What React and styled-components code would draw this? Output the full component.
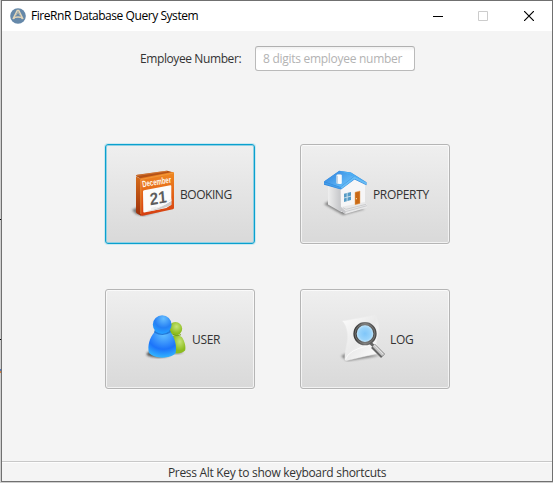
import React from "react";
import styled, { createGlobalStyle } from "styled-components";

const GlobalStyle = createGlobalStyle`
  * { box-sizing: border-box; }
  body { margin: 0; overflow: hidden; }
`;

const Desktop = styled.div`
  width: 553px;
  height: 483px;
  padding: 0 0 1px 1px;
  background:
    linear-gradient(#000, #000) 0 219px / 1px 1px no-repeat,
    linear-gradient(#000, #000) 0 339px / 1px 1px no-repeat,
    linear-gradient(#5878b8 50%, #d08040 50%) 0 369px / 1px 4px no-repeat,
    #cfcfcf;
`;

const Window = styled.div`
  width: 552px;
  height: 482px;
  display: flex;
  flex-direction: column;
  border: 1px solid #707070;
  background: #f4f4f4;
  color: #333;
  font-family: "Open Sans", "Noto Sans", sans-serif;
  font-size: 12px;
  line-height: 16px;
`;

const TitleBar = styled.header`
  height: 30px;
  flex: none;
  display: flex;
  align-items: center;
  padding-left: 8px;
  background: #fff;
  color: #000;
`;

const Text = styled.span`
  white-space: nowrap;
  letter-spacing: ${(p) => p.$track || 0}px;
`;

const Title = styled(Text)`
  flex: 1;
  margin-left: 5px;
`;

const WindowButton = styled.button`
  width: 45px;
  height: 29px;
  padding: 0;
  border: 0;
  display: grid;
  place-items: center;
  background: none;
  color: ${(p) => (p.disabled ? "#ccc" : "#000")};
`;

const WindowControls = styled.div`
  display: flex;
  gap: 0.5px;
  padding-right: 1px;
`;

const SearchRow = styled.label`
  display: flex;
  align-items: center;
  flex: none;
  height: 25px;
  margin: 15px 0 0 138px;
`;

const LabelBox = styled.span`
  width: 115px;
  display: flex;
  padding-top: 1px;
`;

const NumberInput = styled.input`
  width: 160px;
  height: 25px;
  padding: 0 7px;
  border: 1px solid #bababa;
  border-top-color: #b0b0b0;
  border-radius: 3px;
  outline: none;
  background: linear-gradient(#f0f0f0, #fff 4px);
  font: inherit;
  letter-spacing: -0.28px;
  &::placeholder { color: #b3b3b3; opacity: 1; }
`;

const MenuGrid = styled.main`
  flex: 1;
  display: grid;
  grid-template-columns: 150px 150px;
  grid-template-rows: 100px 100px;
  gap: 45px;
  padding: 73px 0 0 103px;
`;

const MenuButton = styled.button`
  display: flex;
  align-items: center;
  justify-content: center;
  gap: 4px;
  padding: 0;
  border: 1px solid ${(p) => (p.$focused ? "#0aa0ce" : "#b5b5b5")};
  border-radius: 3px;
  background: linear-gradient(#efefef, #d9d9d9);
  box-shadow: ${(p) =>
    p.$focused
      ? "inset 0 0 0 1px #8fd0e4, 0 0 0 1px #cbe8f0"
      : "inset 0 0 0 1px rgba(255,255,255,.65), 0 1px 0 #fafafa"};
  color: #333;
  font: inherit;
  svg { flex: none; overflow: visible; }
`;

const Caption = styled(Text)`
  width: ${(p) => p.$width}px;
  padding-top: 2px;
  text-align: left;
`;

const StatusBar = styled.footer`
  height: 20px;
  flex: none;
  display: flex;
  align-items: center;
  justify-content: center;
  border-top: 1px solid #c8c8c8;
  box-shadow: inset 0 1px #fdfdfd;
  padding-top: 2px;
`;

const AppIcon = () => (
  <svg width="16" height="16" viewBox="0 0 16 16" fill="none">
    <circle cx="8" cy="8" r="7.8" fill="#6588a9" />
    <path d="M3 11 7.3 2.5h1.4L13 11M3.3 11c1-2.6 8.4-2.6 9.4 0" stroke="#e2d5b9" strokeWidth="1.6" />
    <path d="M6 7.5 8 4l2 3.5" stroke="#b4b5a9" />
  </svg>
);

const BookingIcon = () => (
  <svg width="48" height="48" viewBox="0 0 48 48">
    <defs>
      <linearGradient id="calFront" x2="0" y2="1"><stop stopColor="#f08a22" /><stop offset="1" stopColor="#d53d10" /></linearGradient>
      <linearGradient id="calSide" x2="0" y2="1"><stop stopColor="#d76c1a" /><stop offset="1" stopColor="#9b2e0a" /></linearGradient>
      <filter id="calBlur"><feGaussianBlur stdDeviation="1.2" /></filter>
    </defs>
    <path d="M4 40 12 36 32 41 15 46 8 44z" fill="#333" opacity=".6" filter="url(#calBlur)" />
    <path d="M8 6.5 13 9v36.7L9 43.5q-1-.5-1-2z" fill="url(#calSide)" />
    <path d="M8 6q0-1 1-1.2L38.5.7q1-.2 2 .2l5 1.5L13 9z" fill="#b55217" />
    <path d="M9 5.5 39 1.2" stroke="#e58d41" strokeWidth=".6" />
    <path d="M12.2 9.5q0-1.2 1.2-1.4L44.5 2q1.5-.3 1.5 1.2v34.6q0 1.2-1.1 1.5l-30.4 6.5q-1.8.4-1.9-1.4z" fill="url(#calFront)" />
    <path d="M12.8 44V9.5l32.5-6.4" fill="none" stroke="#f4a34d" strokeWidth=".6" />
    <path d="M15 21.5q0-1 1-1.2l26.3-5q1-.2 1 .8v18.6l-5 3.3-22 4.5q-1 .2-1-.8z" fill="#fcfcfc" />
    <path d="M17 41.5q15-2.5 26.3-11V35q-10 5-26.3 6.5" fill="#ccc" />
    <path d="M23 38q12-2.5 20.3-9.5v2Q34 38 23 40z" fill="#eee" />
    <text transform="translate(14.8 17.2) rotate(-9)" textLength="29" lengthAdjust="spacingAndGlyphs" fontFamily="Liberation Sans" fontWeight="bold" fontSize="9" fill="#fff8ee">December</text>
    <text transform="translate(22.3 35.3) rotate(-10) skewX(-5)" textLength="17" lengthAdjust="spacingAndGlyphs" fontFamily="Liberation Sans" fontWeight="bold" fontSize="17" fill="#5e5e5e">21</text>
    <path d="M28 37q9-2 15.3-6.5" fill="none" stroke="#fff" strokeWidth="1" />
  </svg>
);

const PropertyIcon = () => (
  <svg width="48" height="48" viewBox="0 0 48 48">
    <defs>
      <linearGradient id="roof" x2="1" y2=".8"><stop stopColor="#287edc" /><stop offset="1" stopColor="#6dc4fb" /></linearGradient>
      <linearGradient id="sideWall"><stop stopColor="#eee" /><stop offset="1" stopColor="#c4c5c8" /></linearGradient>
      <filter id="houseBlur"><feGaussianBlur stdDeviation="1.2" /></filter>
    </defs>
    <path d="M3 34 10 30 44 39 22 45z" fill="#444" opacity=".6" filter="url(#houseBlur)" />
    <path d="M7 14 20 18v24L7 34.5z" fill="url(#sideWall)" />
    <path d="m19.6 18 14-9.5L44 15v20L20 42z" fill="#f6f6f7" />
    <path d="m20 37 23.5-5 2.5 2.5v3.2L24.5 44 20 41z" fill="#e8e8e9" />
    <path d="m20 39 4.2 2.7L46 35.7M22 37.7l3 1.6 20-5" fill="none" stroke="#bfc0c3" strokeWidth=".7" />
    <path d="m20 37 4.5 4v3l-4.5-3z" fill="#c7c7ca" />
    <path d="M3 11.5 18.3.8 30 2.5 45.5 12.2v3L33.5 9.5 20 19.5 3 14.7z" fill="#3387db" />
    <path d="M3.2 11.5 18.3 1l14.8 5.3-13.8 10.8z" fill="url(#roof)" />
    <path d="m18.3 1 11.5 1.5 15.6 10-12-5.8z" fill="#4cadf3" />
    <path d="m20 18 13.4-10.4 12 6" fill="none" stroke="#67bdf5" strokeWidth="2" />
    <path d="M3.2 13 19.8 18.3" stroke="#439eea" strokeWidth="1.5" />
    <path d="M15.5 5q2.5-1.5 5.3 0v8.5q-2.5 1.2-5.3-.2z" fill="#f8fafc" />
    <path d="M15.5 5.2v8l1.3.7V6zM15.5 5q2.7-1.5 5.3 0" fill="#b6cadd" />
    <path d="m23 23.8 7-1.8v8l-7 2z" fill="#559bc5" />
    <path d="m26.2 23-.1 8M23 28l7-1.9" stroke="#deebf1" strokeWidth=".8" />
    <path d="m34 22.3 5-1.3v12.4l-5 1.3z" fill="#c96916" stroke="#e9a45c" strokeWidth=".5" />
    <circle cx="35.4" cy="28.7" r=".6" fill="#fae5af" />
  </svg>
);

const UserIcon = () => (
  <svg width="48" height="48" viewBox="0 0 48 48">
    <defs>
      <radialGradient id="blueBall" cx=".57" cy=".18" r=".75"><stop stopColor="#65bdff" /><stop offset=".65" stopColor="#2580f4" /><stop offset="1" stopColor="#259cff" /></radialGradient>
      <radialGradient id="blueBody" cx=".55" cy=".08" r=".95"><stop stopColor="#62c0ff" /><stop offset=".62" stopColor="#1c74fa" /><stop offset="1" stopColor="#35baff" /></radialGradient>
      <radialGradient id="greenBall" cx=".58" cy=".35"><stop stopColor="#c5e478" /><stop offset="1" stopColor="#8dbc1f" /></radialGradient>
      <filter id="userBlur"><feGaussianBlur stdDeviation="1.2" /></filter>
    </defs>
    <ellipse cx="18.5" cy="39" rx="12" ry="3.7" fill="#222" opacity=".7" filter="url(#userBlur)" />
    <ellipse cx="35" cy="37" rx="8" ry="2.5" fill="#444" opacity=".4" filter="url(#userBlur)" />
    <path d="M32 21q6-2 9.8 1c2.8 3.7 4.3 9.7 3.3 13.5Q41 39.5 33 38z" fill="url(#greenBall)" />
    <circle cx="35.4" cy="13.7" r="6.8" fill="url(#greenBall)" />
    <path d="M33 19.5q4 2.4 8 .2" fill="none" stroke="#719c18" />
    <path d="M14.3 17.3h16.5c4 5.8 6.4 14.7 4.7 21-5.5 5.7-20.7 6-26.5-.3-2-7 .8-15.3 5.3-20.7z" fill="url(#blueBody)" />
    <path d="M14 17.5q9 5.2 17-.2l-1.5-3H15z" fill="#2379d8" />
    <circle cx="22.2" cy="9.7" r="9.4" fill="url(#blueBall)" />
  </svg>
);

const LogIcon = () => (
  <svg width="48" height="48" viewBox="0 0 48 48">
    <defs>
      <linearGradient id="paper" x2="1" y2="1"><stop stopColor="#fcfcfc" /><stop offset=".5" stopColor="#eaeaea" /><stop offset="1" stopColor="#fff" /></linearGradient>
      <radialGradient id="lens"><stop stopColor="#7fc6f9" /><stop offset=".6" stopColor="#99d3fa" /><stop offset="1" stopColor="#d9effa" /></radialGradient>
      <linearGradient id="metal"><stop stopColor="#3c3c3c" /><stop offset=".5" stopColor="#777" /><stop offset="1" stopColor="#4c4c4c" /></linearGradient>
      <filter id="logBlur"><feGaussianBlur stdDeviation="1" /></filter>
    </defs>
    <path d="M3 41 9 38l20 2 14 0-9 2-25 4z" fill="#444" opacity=".6" filter="url(#logBlur)" />
    <path d="M4.3 6 37 .2c4.5 6.6 5 15.5 2 23.5q-1.5 6 1.2 14.5L9 45.5q-2 .4-2.1-1.3C6.5 35 11 26 9.2 17Q8.2 10 4.3 6z" fill="url(#paper)" stroke="#ededed" strokeWidth=".5" />
    <path d="M7.5 44.5q3-10 24-14" fill="none" stroke="#fff" strokeWidth=".7" />
    <path d="m32 27.5 6 6" stroke="#666" strokeWidth="3" />
    <path d="m35 31 10 10" stroke="#666" strokeWidth="5.5" />
    <path d="m35.6 30.4 9.5 9.7" stroke="#c8c8c8" strokeWidth="3" />
    <path d="m36.5 30.2 9.2 9.3" stroke="#f3f3f3" strokeWidth=".8" />
    <circle cx="27" cy="18.7" r="10" fill="url(#lens)" stroke="url(#metal)" strokeWidth="3.3" />
    <circle cx="27" cy="18.7" r="9.9" fill="none" stroke="#90908c" strokeWidth=".6" />
  </svg>
);

const items = [
  { label: "BOOKING", Icon: BookingIcon, width: 52, track: -0.45, focused: true },
  { label: "PROPERTY", Icon: PropertyIcon, width: 56, track: -0.35 },
  { label: "USER", Icon: UserIcon, width: 28, track: -0.35 },
  { label: "LOG", Icon: LogIcon, width: 22, track: -0.3 },
];

export default function App() {
  return (
    <Desktop>
      <GlobalStyle />
      <Window>
        <TitleBar>
          <AppIcon />
          <Title $track={-0.44}>FireRnR Database Query System</Title>
          <WindowControls>
            <WindowButton aria-label="Minimize">
              <svg width="10" height="10"><path d="M0 5.5h10" stroke="currentColor" /></svg>
            </WindowButton>
            <WindowButton aria-label="Maximize" disabled>
              <svg width="10" height="10"><path d="M.5.5h9v9h-9z" fill="none" stroke="currentColor" /></svg>
            </WindowButton>
            <WindowButton aria-label="Close">
              <svg width="10" height="10"><path d="m0 0 10 10M10 0 0 10" stroke="currentColor" strokeWidth="1.2" /></svg>
            </WindowButton>
          </WindowControls>
        </TitleBar>
        <SearchRow>
          <LabelBox><Text $track={-0.4}>Employee Number:</Text></LabelBox>
          <NumberInput placeholder="8 digits employee number" />
        </SearchRow>
        <MenuGrid>
          {items.map(({ label, Icon, width, track, focused }) => (
            <MenuButton key={label} $focused={focused}>
              <Icon />
              <Caption $width={width} $track={track}>{label}</Caption>
            </MenuButton>
          ))}
        </MenuGrid>
        <StatusBar><Text $track={-0.3}>Press Alt Key to show keyboard shortcuts</Text></StatusBar>
      </Window>
    </Desktop>
  );
}
